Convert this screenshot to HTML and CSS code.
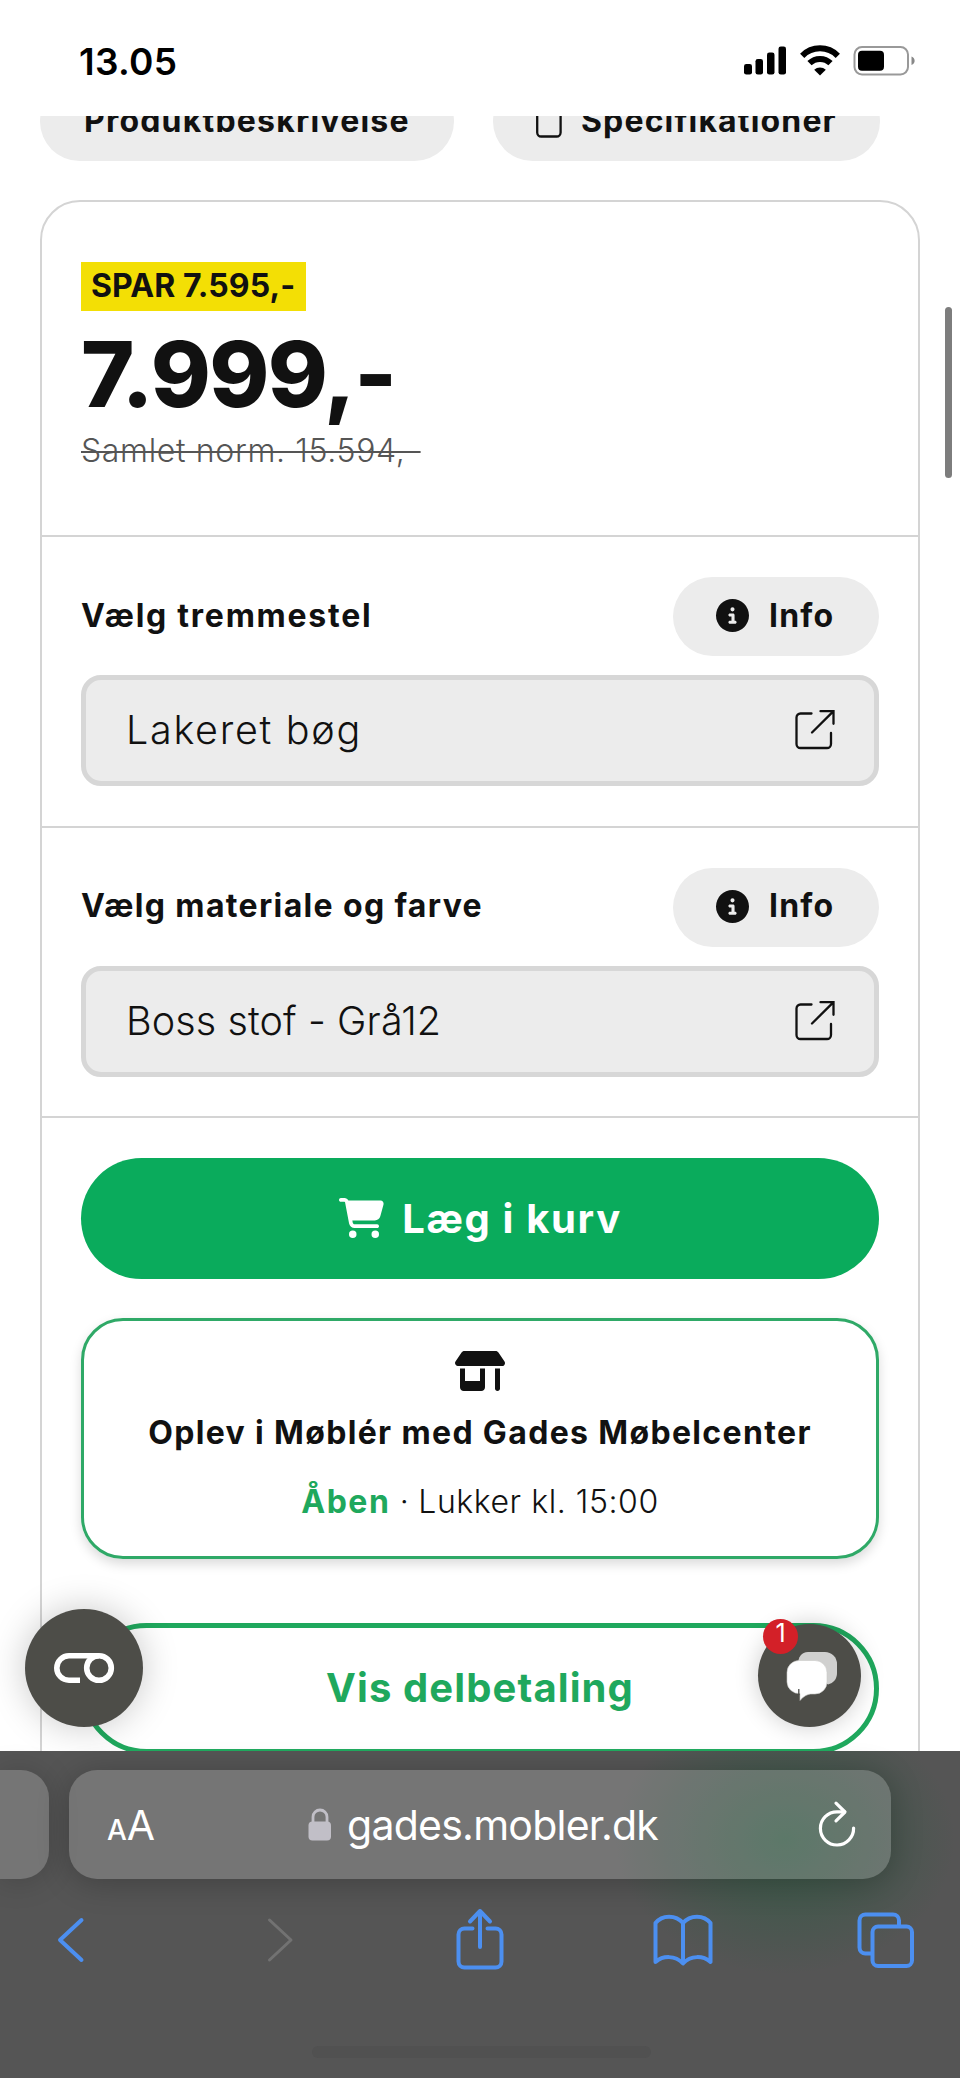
FILE: index.html
```html
<!DOCTYPE html>
<html lang="da">
<head>
<meta charset="utf-8">
<title>gades.mobler.dk</title>
<link rel="stylesheet" href="styles.css">
</head>
<body>
<svg class="defs" aria-hidden="true">
  <symbol id="i-info" viewBox="0 0 512 512"><path fill="#111" d="M256 512A256 256 0 1 0 256 0a256 256 0 1 0 0 512zM216 336h24V272H216c-13.3 0-24-10.7-24-24s10.7-24 24-24h48c13.3 0 24 10.7 24 24v88h8c13.3 0 24 10.7 24 24s-10.7 24-24 24H216c-13.3 0-24-10.7-24-24s10.7-24 24-24zm40-208a32 32 0 1 1 0 64 32 32 0 1 1 0-64z"/></symbol>
  <symbol id="i-open" viewBox="0 0 40 41"><g fill="none" stroke="#111" stroke-width="2.3" stroke-linecap="round"><path d="M16.5 4.500H5.500a4 4 0 0 0-4 4V35a4 4 0 0 0 4 4H32a4 4 0 0 0 4-4V24"/><path d="M25.500 2.200H38.500V14.800M38 2.600 17 23.500" stroke-linejoin="miter"/></g></symbol>
</svg>
<header class="status">
  <span class="clock">13.05</span>
  <div class="status-icons">
    <svg width="42" height="29" viewBox="0 0 42 29"><rect x="0" y="18" width="8" height="10.500" rx="2.300"/><rect x="11.500" y="13" width="7.500" height="15.500" rx="2.300"/><rect x="23" y="6.500" width="7.500" height="22" rx="2.300"/><rect x="34.500" y="0.500" width="7.500" height="28" rx="2.300"/></svg>
    <svg class="wifi" width="40" height="30" viewBox="0 0 40 30"><path d="M2.200 9.800a25 25 0 0 1 35.600 0M9.500 17.200a15 15 0 0 1 21 0" fill="none" stroke="#000" stroke-width="6"/><path d="M20 29.500l-5.800-5.700a8.300 8.300 0 0 1 11.600 0z"/></svg>
    <svg class="battery" width="62" height="30" viewBox="0 0 62 30"><rect x="1.500" y="1" width="53.500" height="27.500" rx="7.500" fill="none" stroke="#999" stroke-width="2"/><rect x="5" y="4.800" width="26" height="19.900" rx="4"/><path d="M58.500 10.500c4.200 1.500 4.200 7 0 8.500z" fill="#888"/></svg>
  </div>
</header>

<main class="page">
  <nav class="tabs">
    <a class="pill tab tab-desc"><span>Produktbeskrivelse</span></a>
    <a class="pill tab tab-spec"><svg width="26" height="34" viewBox="0 0 26 34"><rect x="1.200" y="1.200" width="23.400" height="31.300" rx="4" fill="none" stroke="#111" stroke-width="2.300"/></svg><span>Specifikationer</span></a>
  </nav>

  <article class="card">
    <section class="price-block">
      <span class="badge">SPAR 7.595,-</span>
      <strong class="price">7.999,-</strong>
      <s class="old-price">Samlet norm. 15.594,-</s>
    </section>

    <section class="option">
      <div class="option-head">
        <h2 class="label-frame">Vælg tremmestel</h2>
        <button class="pill info"><svg width="33" height="33"><use href="#i-info"/></svg><span>Info</span></button>
      </div>
      <div class="select"><span class="value-frame">Lakeret bøg</span><svg width="40" height="41"><use href="#i-open"/></svg></div>
    </section>

    <section class="option">
      <div class="option-head">
        <h2 class="label-fabric">Vælg materiale og farve</h2>
        <button class="pill info"><svg width="33" height="33"><use href="#i-info"/></svg><span>Info</span></button>
      </div>
      <div class="select"><span class="value-fabric">Boss stof - Grå12</span><svg width="40" height="41"><use href="#i-open"/></svg></div>
    </section>

    <section class="actions">
      <button class="buy"><svg width="45" height="40" viewBox="0 0 576 512"><path fill="#fff" d="M0 24C0 10.700 10.700 0 24 0H69.500c22 0 41.500 12.800 50.600 32h411c26.300 0 45.500 25 38.600 50.400l-41 152.300c-8.500 31.400-37 53.300-69.500 53.300H170.700l5.400 28.500c2.200 11.300 12.100 19.500 23.600 19.500H488c13.300 0 24 10.700 24 24s-10.700 24-24 24H199.700c-34.600 0-64.300-24.600-70.700-58.500L77.400 54.500c-.7-3.800-4-6.500-7.900-6.500H24C10.700 48 0 37.300 0 24zM128 464a48 48 0 1 1 96 0 48 48 0 1 1-96 0zm336-48a48 48 0 1 1 0 96 48 48 0 1 1 0-96z"/></svg><span>Læg i kurv</span></button>
      <div class="store">
        <svg width="50" height="40" viewBox="0 0 640 512"><path fill="#111" d="M36.800 192H603.200c20.300 0 36.800-16.500 36.800-36.800c0-7.300-2.200-14.400-6.200-20.400L558.200 21.400C549.300 8 534.400 0 518.300 0H121.700c-16 0-31 8-39.900 21.400L6.200 134.700c-4 6.100-6.200 13.200-6.200 20.400C0 175.500 16.500 192 36.800 192zM64 224V384v80c0 26.500 21.500 48 48 48H336c26.500 0 48-21.500 48-48V384 224H320V384H128V224H64zm448 0V480c0 17.700 14.300 32 32 32s32-14.300 32-32V224H512z"/></svg>
        <strong class="store-name">Oplev i Møblér med Gades Møbelcenter</strong>
        <p class="hours"><b>Åben</b><span class="dot">·</span><span class="closing">Lukker kl. 15:00</span></p>
      </div>
      <button class="finance"><span>Vis delbetaling</span></button>
    </section>
  </article>

  <div class="consent"><svg width="62" height="32" viewBox="0 0 62 32" fill="none" stroke="#fff" stroke-width="5.600"><path d="M27 28.200H16a12.200 12.200 0 0 1 0-24.400H46"/><circle cx="46" cy="16" r="12.300"/></svg></div>
  <div class="chat">
    <svg width="52" height="51" viewBox="0 0 52 51"><path fill="#d0d0cf" d="M22 1h17a12 12 0 0 1 12 12v9c0 6-3.500 10-9 11.500L12 14C12 6 15.500 1 22 1z"/><path fill="#fff" stroke="#c9c9c8" stroke-width=".6" d="M13 9.500h16a12 12 0 0 1 12 12v9.500a12 12 0 0 1-12 12h-3c-5 0-8.500 2.500-12 6.500V42.500A12 12 0 0 1 1 31v-9.500a12 12 0 0 1 12-12z"/><path d="M12.800 38v6" stroke="#4d4d48" stroke-width="1.300"/></svg>
    <span class="count">1</span>
  </div>
  <div class="scrollbar"></div>
</main>

<footer class="browser">
  <div class="address-row">
    <div class="prev-tab"></div>
    <div class="address">
      <span class="reader"><small>A</small><span>A</span></span>
      <span class="host"><svg width="24" height="33" viewBox="0 0 24 33"><path d="M5 15V9a7 7 0 0 1 14 0v6" fill="none" stroke="#c1bfc7" stroke-width="2.800"/><rect x=".5" y="13.500" width="22.500" height="19" rx="4" fill="#c1bfc7"/></svg><span class="host-name">gades.mobler.dk</span></span>
      <svg class="reload" width="38" height="46" viewBox="0 0 38 46" fill="none" stroke="#fff" stroke-width="3.200" stroke-linecap="round" stroke-linejoin="round"><path d="M26.500 10.800H19A16.600 16.600 0 1 0 35.600 27"/><path d="M18 2.200l9 8.800-9 8.800"/></svg>
    </div>
  </div>
  <nav class="toolbar">
    <svg width="27" height="48" viewBox="0 0 27 48"><path d="M24.500 4 3 24l21.500 20"/></svg>
    <svg class="off" width="27" height="48" viewBox="0 0 27 48"><path d="M2.500 4 24 24 2.500 44"/></svg>
    <svg class="share" width="48" height="62" viewBox="0 0 48 62"><path d="M16.500 20.500H8.500a6 6 0 0 0-6 6V53.500a6 6 0 0 0 6 6h31a6 6 0 0 0 6-6V26.500a6 6 0 0 0-6-6h-8M24 39V3M14 13.500 24 3l10 10.500"/></svg>
    <svg class="book" width="60" height="52" viewBox="0 0 60 52"><path d="M30 9C23 .5 9 .5 2.500 9V48C10 41.500 22 41 30 49.500 38 41 50 41.500 57.500 48V9C51 .5 37 .5 30 9V49"/></svg>
    <svg class="windows" width="57" height="56" viewBox="0 0 57 56"><rect x="15.500" y="14.500" width="39.500" height="39.500" rx="5.500"/><path d="M15 41.500H8.500a6 6 0 0 1-6-6V8.500a6 6 0 0 1 6-6h27.500a6 6 0 0 1 6 6V14"/></svg>
  </nav>
  <div class="home"></div>
</footer>
</body>
</html>
```

FILE: styles.css
```css
* { box-sizing: border-box; }
body {
  margin: 0;
  width: 960px;
  height: 2078px;
  overflow: hidden;
  display: grid;
  grid-template-rows: 116px 1635px 327px;
  background: #fff;
  color: #111;
  font-family: Inter, "Liberation Sans", sans-serif;
}
svg { display: block; flex: none; overflow: visible; }
.defs { position: absolute; width: 0; height: 0; }
button { border: 0; padding: 0; color: inherit; font: inherit; }
h2, p { margin: 0; }
span, strong, s, h2, b { white-space: nowrap; }

.status { display: flex; justify-content: space-between; padding: 41px 45px 0 79px; }
.clock { font-size: 37px; line-height: 41px; font-weight: 600; letter-spacing: 0.300px; color: #000; }
.status-icons { display: flex; padding-top: 5px; }
.wifi { margin-left: 14px; }
.battery { margin-left: 13px; }

.page { position: relative; overflow: hidden; padding: 0 40px; }
.pill { display: flex; align-items: center; height: 79px; border-radius: 40px; background: #ececec; }
.pill span { font-size: 32px; line-height: 40px; font-weight: 700; }
.tabs { display: flex; gap: 39px; margin-top: -34px; }
.tab { padding-bottom: 2px; }
.tab-desc { width: 414px; padding-left: 44px; }
.tab-desc span { letter-spacing: 1.200px; }
.tab-spec { width: 387px; padding-left: 43px; gap: 19px; }
.tab-spec span { letter-spacing: 1.150px; }

.card { margin-top: 39px; border: 2px solid #d4d4d4; border-radius: 40px; height: 1700px; }
.price-block { height: 335px; padding: 60px 39px 0; border-bottom: 2px solid #d4d4d4; display: flex; flex-direction: column; align-items: flex-start; }
.badge { width: 225px; height: 49px; padding-left: 10px; background: #f3df05; font-size: 32px; line-height: 47px; font-weight: 700; letter-spacing: 0.100px; }
.price { font-size: 91px; line-height: 126px; font-weight: 800; letter-spacing: -1.600px; }
.old-price { font-size: 32px; line-height: 27px; font-weight: 300; letter-spacing: 0.650px; color: #555; text-decoration-thickness: 2px; }

.option { height: 290.500px; padding: 40px 39px 0; border-bottom: 2px solid #d4d4d4; }
.option-head { display: flex; justify-content: space-between; align-items: center; margin-bottom: 19px; }
.option-head h2 { font-size: 32px; line-height: 40px; font-weight: 700; padding-bottom: 2px; }
.label-frame { letter-spacing: 1.750px; }
.label-fabric { letter-spacing: 1.350px; }
.info { width: 206px; padding: 0 0 2px 43px; gap: 20px; }
.info span { letter-spacing: 1.200px; }
.select { display: flex; align-items: center; justify-content: space-between; height: 111px; padding: 0 39px 2px 40px; border: 5px solid #d7d7d7; border-radius: 20px; background: #ececec; }
.select span { padding-top: 1px; font-size: 39.500px; line-height: 48px; font-weight: 300; }
.value-frame { letter-spacing: 1.700px; }
.value-fabric { letter-spacing: 0.100px; }

.actions { padding: 40px 39px 0; }
.buy { display: flex; align-items: center; justify-content: center; gap: 18px; width: 798px; height: 120.500px; padding-left: 1px; border-radius: 61px; background: #0aab5c; color: #fff; }
.buy span { font-size: 40px; font-weight: 700; letter-spacing: 1.650px; }
.store { display: flex; flex-direction: column; align-items: center; height: 241px; margin-top: 39.500px; padding-top: 30px; border: 3px solid #2fa967; border-radius: 42px; box-shadow: 0 5px 12px rgba(0, 0, 0, .15); }
.store-name { margin-top: 22px; font-size: 32px; line-height: 40px; font-weight: 700; letter-spacing: 1.350px; }
.hours { display: flex; margin-top: 29px; font-size: 32px; line-height: 40px; font-weight: 300; }
.hours b { font-weight: 700; color: #1fa85d; letter-spacing: 1.500px; }
.dot { width: 28px; text-align: center; }
.closing { letter-spacing: 0.550px; }
.finance { width: 798px; height: 131px; margin-top: 64px; padding-bottom: 3px; border: 5px solid #1fa85d; border-radius: 66px; background: none; color: #1fa85d; }
.finance span { font-size: 40px; font-weight: 700; letter-spacing: 1.100px; }

.consent, .chat { position: absolute; display: grid; place-items: center; border-radius: 50%; background: #4d4d48; }
.consent { left: 24.500px; top: 1492.500px; width: 118px; height: 118px; box-shadow: 0 0 36px rgba(0, 0, 0, .22); }
.chat { left: 758px; top: 1507.500px; width: 103px; height: 103px; padding: 2px 0 0 5px; box-shadow: 0 0 24px rgba(0, 0, 0, .2); }
.count { position: absolute; left: 5px; top: -5px; width: 35px; height: 35px; border-radius: 50%; background: #d32028; color: #fff; font-size: 25px; line-height: 28px; text-align: center; }
.scrollbar { position: absolute; left: 945px; top: 191px; width: 7px; height: 171px; border-radius: 4px; background: #7d7d7d; }

.browser { background: radial-gradient(ellipse 170px 135px at 785px 88px, rgba(35, 92, 61, .6), rgba(45, 90, 65, .38) 50%, rgba(60, 85, 70, 0)), #555; }
.address-row { display: flex; gap: 20px; padding-top: 19px; }
.prev-tab { width: 49px; height: 108.500px; border-radius: 0 28px 28px 0; background: rgba(255, 255, 255, .19); box-shadow: 0 2px 30px rgba(0, 0, 0, .18); }
.address { display: flex; align-items: center; width: 822px; height: 108.500px; padding: 0 35px 0 38px; border-radius: 28px; background: rgba(255, 255, 255, .19); box-shadow: 0 4px 32px rgba(0, 0, 0, .24); color: #fff; }
.reader { display: flex; align-items: baseline; width: 201px; padding-top: 6px; font-size: 41px; line-height: 50px; }
.reader small { font-size: 28px; font-weight: 500; }
.host { display: flex; align-items: center; gap: 15px; font-size: 41px; line-height: 50px; }
.host-name { padding-top: 1px; letter-spacing: -0.750px; }
.reload { margin-left: auto; }
.toolbar { display: flex; align-items: center; height: 70px; margin-top: 26.500px; padding: 0 46px 0 57px; fill: none; stroke: #4c8ff0; stroke-width: 4; stroke-linecap: round; stroke-linejoin: round; }
.off { margin-left: 183px; stroke: #727272; stroke-width: 3; }
.share { margin-left: 162px; margin-bottom: 2px; }
.book { margin-left: 149px; }
.windows { margin-left: auto; }
.home { width: 339px; height: 12px; margin: 71px 0 0 312px; border-radius: 6px; background: #515151; }
```
